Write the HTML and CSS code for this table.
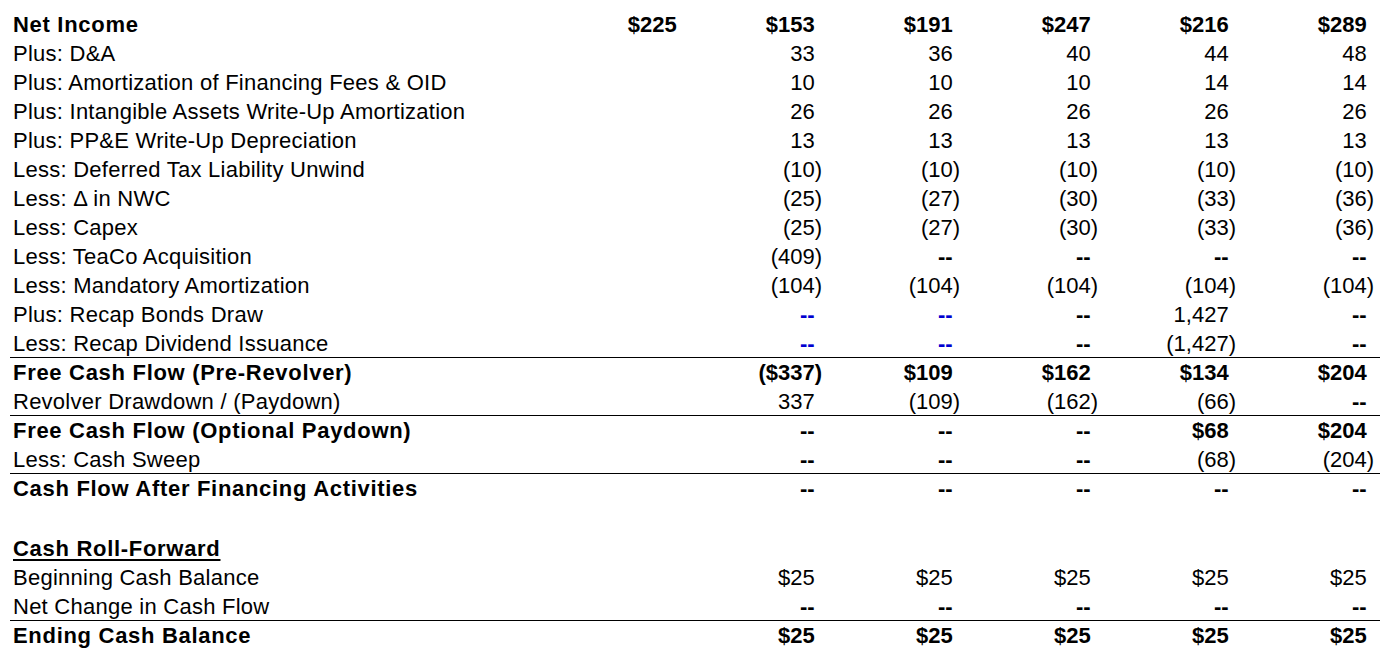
FILE: index.html
```html
<!DOCTYPE html>
<html>
<head>
<meta charset="utf-8">
<link rel="stylesheet" href="styles.css">
</head>
<body>
<table class="fin">
<colgroup><col class="c-label"><col class="c-num"><col class="c-num"><col class="c-num"><col class="c-num"><col class="c-num"><col class="c-num"></colgroup>
<tbody>
<tr class="bold"><td class="lbl">Net Income</td><td>$225<i>)</i></td><td>$153<i>)</i></td><td>$191<i>)</i></td><td>$247<i>)</i></td><td>$216<i>)</i></td><td>$289<i>)</i></td></tr>
<tr><td class="lbl">Plus: D&amp;A</td><td></td><td>33<i>)</i></td><td>36<i>)</i></td><td>40<i>)</i></td><td>44<i>)</i></td><td>48<i>)</i></td></tr>
<tr><td class="lbl">Plus: Amortization of Financing Fees &amp; OID</td><td></td><td>10<i>)</i></td><td>10<i>)</i></td><td>10<i>)</i></td><td>14<i>)</i></td><td>14<i>)</i></td></tr>
<tr><td class="lbl">Plus: Intangible Assets Write-Up Amortization</td><td></td><td>26<i>)</i></td><td>26<i>)</i></td><td>26<i>)</i></td><td>26<i>)</i></td><td>26<i>)</i></td></tr>
<tr><td class="lbl">Plus: PP&amp;E Write-Up Depreciation</td><td></td><td>13<i>)</i></td><td>13<i>)</i></td><td>13<i>)</i></td><td>13<i>)</i></td><td>13<i>)</i></td></tr>
<tr><td class="lbl">Less: Deferred Tax Liability Unwind</td><td></td><td>(10)</td><td>(10)</td><td>(10)</td><td>(10)</td><td>(10)</td></tr>
<tr><td class="lbl">Less: Δ in NWC</td><td></td><td>(25)</td><td>(27)</td><td>(30)</td><td>(33)</td><td>(36)</td></tr>
<tr><td class="lbl">Less: Capex</td><td></td><td>(25)</td><td>(27)</td><td>(30)</td><td>(33)</td><td>(36)</td></tr>
<tr><td class="lbl">Less: TeaCo Acquisition</td><td></td><td>(409)</td><td><b class="dash">--</b><i>)</i></td><td><b class="dash">--</b><i>)</i></td><td><b class="dash">--</b><i>)</i></td><td><b class="dash">--</b><i>)</i></td></tr>
<tr><td class="lbl">Less: Mandatory Amortization</td><td></td><td>(104)</td><td>(104)</td><td>(104)</td><td>(104)</td><td>(104)</td></tr>
<tr><td class="lbl">Plus: Recap Bonds Draw</td><td></td><td class="blue"><b class="dash">--</b><i>)</i></td><td class="blue"><b class="dash">--</b><i>)</i></td><td><b class="dash">--</b><i>)</i></td><td>1,427<i>)</i></td><td><b class="dash">--</b><i>)</i></td></tr>
<tr><td class="lbl">Less: Recap Dividend Issuance</td><td></td><td class="blue"><b class="dash">--</b><i>)</i></td><td class="blue"><b class="dash">--</b><i>)</i></td><td><b class="dash">--</b><i>)</i></td><td>(1,427)</td><td><b class="dash">--</b><i>)</i></td></tr>
<tr class="bold rule"><td class="lbl">Free Cash Flow (Pre-Revolver)</td><td></td><td>($337)</td><td>$109<i>)</i></td><td>$162<i>)</i></td><td>$134<i>)</i></td><td>$204<i>)</i></td></tr>
<tr><td class="lbl">Revolver Drawdown / (Paydown)</td><td></td><td>337<i>)</i></td><td>(109)</td><td>(162)</td><td>(66)</td><td><b class="dash">--</b><i>)</i></td></tr>
<tr class="bold rule"><td class="lbl">Free Cash Flow (Optional Paydown)</td><td></td><td>--<i>)</i></td><td>--<i>)</i></td><td>--<i>)</i></td><td>$68<i>)</i></td><td>$204<i>)</i></td></tr>
<tr><td class="lbl">Less: Cash Sweep</td><td></td><td><b class="dash">--</b><i>)</i></td><td><b class="dash">--</b><i>)</i></td><td><b class="dash">--</b><i>)</i></td><td>(68)</td><td>(204)</td></tr>
<tr class="bold rule"><td class="lbl">Cash Flow After Financing Activities</td><td></td><td>--<i>)</i></td><td>--<i>)</i></td><td>--<i>)</i></td><td>--<i>)</i></td><td>--<i>)</i></td></tr>
<tr class="blank"><td class="lbl"></td><td></td><td></td><td></td><td></td><td></td><td></td></tr>
<tr class="bold"><td class="lbl"><u>Cash Roll-Forward</u></td><td></td><td></td><td></td><td></td><td></td><td></td></tr>
<tr><td class="lbl">Beginning Cash Balance</td><td></td><td>$25<i>)</i></td><td>$25<i>)</i></td><td>$25<i>)</i></td><td>$25<i>)</i></td><td>$25<i>)</i></td></tr>
<tr><td class="lbl">Net Change in Cash Flow</td><td></td><td><b class="dash">--</b><i>)</i></td><td><b class="dash">--</b><i>)</i></td><td><b class="dash">--</b><i>)</i></td><td><b class="dash">--</b><i>)</i></td><td><b class="dash">--</b><i>)</i></td></tr>
<tr class="bold rule"><td class="lbl">Ending Cash Balance</td><td></td><td>$25<i>)</i></td><td>$25<i>)</i></td><td>$25<i>)</i></td><td>$25<i>)</i></td><td>$25<i>)</i></td></tr>
</tbody>
</table>
</body>
</html>
```

FILE: styles.css
```css
html, body {
  margin: 0;
  padding: 0;
  background: #ffffff;
}

body {
  padding: 9px 0 0 10px;
  font-family: "Liberation Sans", Arial, sans-serif;
  font-size: 22px;
  color: #000000;
}

.fin {
  border-collapse: separate;
  border-spacing: 0;
  table-layout: fixed;
  width: 1370px;
}

.c-label {
  width: 542px;
}

.c-num {
  width: 138px;
}

.fin td {
  height: 29px;
  padding: 2px 6px 0 0;
  box-sizing: border-box;
  line-height: 27px;
  text-align: right;
  white-space: nowrap;
  overflow: visible;
  vertical-align: top;
}

.fin .blank td {
  height: 31px;
}

.fin td.lbl {
  text-align: left;
  padding-left: 3px;
  letter-spacing: 0.25px;
}

.bold td.lbl {
  letter-spacing: 0.7px;
}

.fin i {
  font-style: normal;
  visibility: hidden;
}

.bold td {
  font-weight: bold;
}

.rule td {
  box-shadow: inset 0 1px 0 #000000;
}

.dash {
  font-weight: bold;
}

.blue {
  color: #0000d0;
}

.fin u {
  text-decoration-thickness: 2px;
  text-underline-offset: 3px;
}
```
